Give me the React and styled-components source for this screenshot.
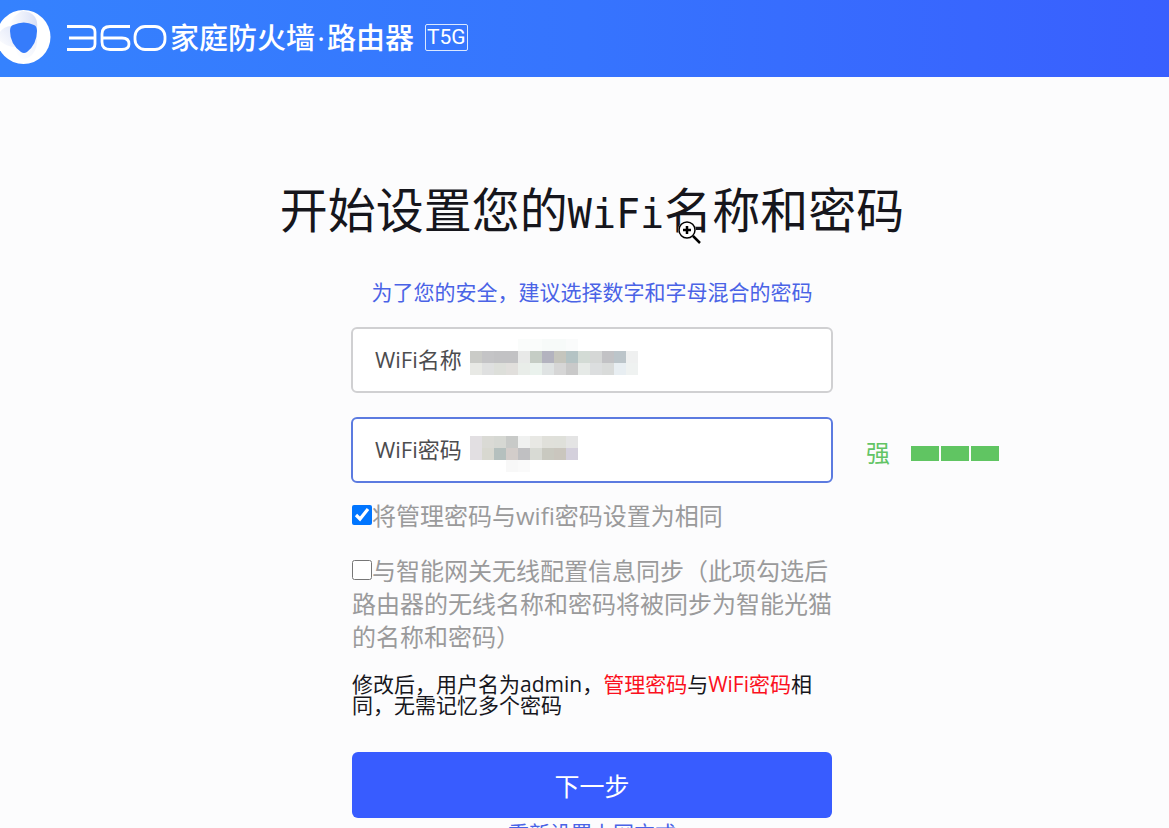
import React, { useState } from "react";
import styled, { createGlobalStyle } from "styled-components";

const Global = createGlobalStyle`
  *, *::before, *::after { box-sizing: border-box; }
  body {
    margin: 0;
    background: #fcfcfd;
    color: #16161c;
    font-family: "Open Sans", "Noto Sans CJK SC", sans-serif;
    overflow: hidden;
  }
`;

const Page = styled.div`
  height: 100vh;
  overflow: hidden;
`;

const Header = styled.header`
  display: flex;
  align-items: center;
  height: 77px;
  padding-bottom: 2px;
  background: linear-gradient(90deg, #3582fe 0%, #3674fe 50%, #395ffe 100%);
  color: #fff;
`;

const Shield = styled.svg`
  flex: none;
  width: 52px;
  height: 60px;
`;

const Wordmark = styled.svg`
  flex: none;
  width: 104px;
  height: 28px;
  margin-left: 14px;
`;

const Brand = styled.span`
  font-size: 29px;
  line-height: 40px;
  font-weight: 500;
  white-space: nowrap;
`;

const Dot = styled.span`
  display: inline-block;
  width: 12px;
  text-align: center;
`;

const Model = styled.span`
  margin-left: 11px;
  padding: 0 1px;
  border: 1px solid #dbe8ff;
  border-radius: 2px;
  font: 21px/25px Roboto, sans-serif;
`;

const Main = styled.main`
  display: flex;
  flex-direction: column;
  align-items: center;
  padding: 97px 0 0 15px;
`;

const Title = styled.h1`
  position: relative;
  margin: 0;
  font-size: 48px;
  line-height: 72px;
  font-weight: 400;
  white-space: nowrap;
`;

const Latin = styled.span`
  font-family: "DejaVu Sans Mono", monospace;
  font-size: 40px;
`;

const Pointer = styled.svg`
  position: absolute;
  left: 397px;
  top: 46px;
  width: 26px;
  height: 26px;
`;

const Hint = styled.p`
  margin: 27px 0 19px;
  font-size: 21px;
  line-height: 31px;
  color: #4a63e6;
`;

const Form = styled.form`
  display: flex;
  flex-direction: column;
  width: 482px;
`;

const Field = styled.div`
  position: relative;
  display: flex;
  align-items: center;
  height: 66px;
  margin-bottom: 24px;
  padding: 0 22px 2px;
  border: 2px solid ${(p) => (p.$active ? "#5c7be0" : "#d0d0d2")};
  border-radius: 6px;
  background: #fff;
`;

const FieldLabel = styled.label`
  flex: none;
  width: 88px;
  font-size: 22px;
  line-height: 32px;
  color: #4c4c4e;
`;

const FieldInput = styled.input`
  flex: 1;
  min-width: 0;
  height: 40px;
  border: 0;
  outline: 0;
  background: transparent;
  font: inherit;
  font-size: 22px;
`;

const Mosaic = styled.svg`
  position: absolute;
  left: 117px;
  top: ${(p) => p.$top}px;
`;

const Strength = styled.div`
  position: absolute;
  left: 100%;
  top: 50%;
  display: flex;
  align-items: center;
  gap: 2px;
  height: 36px;
  margin: -15px 0 0 35px;
  color: #62c465;
  font-size: 24px;
  line-height: 36px;
`;

const StrengthText = styled.span`
  margin-right: 19px;
`;

const Bar = styled.span`
  width: 28px;
  height: 15px;
  background: #60c562;
`;

const Option = styled.label`
  display: block;
  margin: ${(p) => (p.$first ? "-8px" : "22px")} 0 0 1px;
  font-size: 24px;
  line-height: 33px;
  color: #9a9a9b;
`;

const Check = styled.input`
  width: 20px;
  height: 20px;
  margin: 0;
  vertical-align: 0;
`;

const Note = styled.p`
  margin: 21px 0 36px 1px;
  font-size: 21px;
  line-height: 21px;
`;

const Red = styled.span`
  color: #fb1020;
`;

const Next = styled.button`
  height: 66px;
  margin: 0 1px;
  border: 0;
  border-radius: 6px;
  background: #385cff;
  color: #fff;
  font: inherit;
  font-size: 25px;
`;

const Reset = styled.a`
  align-self: center;
  font-size: 21px;
  line-height: 31px;
  color: #4a63e6;
  text-decoration: none;
`;

const NAME_CELLS = [
  ["#fff", "#fff", "#fff", "#fff", "#fafcfb", "#fafcfb", "#f7faf9", "#f7faf9", "#fafbfb"],
  ["#cacbc7", "#c4c4c6", "#c2c2c4", "#c2c2c4", "#e8e9e8", "#c5cdc5", "#b3b3bf", "#c5c5bd", "#b4c3c4", "#d3dbd5", "#d5d7d6", "#c2c2c5", "#bcc5ca", "#eff0f0"],
  ["#e8e9e5", "#dfe0e0", "#dddfda", "#e1dfdc", "#e9ede9", "#eaf2ed", "#dfe3e3", "#d6d6d6", "#c9c9c9", "#e6eae7", "#dcdedf", "#d9dbda", "#e8eef2", "#eff2f1"],
];

const KEY_CELLS = [
  ["#e2dfe2", "#dadad5", "#d6d8d3", "#c8cac8", "#f0f1f0", "#e8e8e4", "#e0e0da", "#dfe0da", "#e4e4e4"],
  ["#e2dfe2", "#d8d8d0", "#b5c0be", "#d3cdca", "#c0c0c2", "#d8dad4", "#c9c9c0", "#cac6be", "#d4d0dc"],
  ["#fff", "#fff", "#fff", "#f8f8f8", "#fafafa"],
];

function Masked({ cells, top }) {
  return (
    <Mosaic $top={top} width="168" height="36" shapeRendering="crispEdges" aria-hidden="true">
      {cells.map((row, y) =>
        row.map((fill, x) => (
          <rect key={`${x}-${y}`} x={x * 12} y={y * 12} width="12" height="12" fill={fill} />
        ))
      )}
    </Mosaic>
  );
}

function ShieldLogo() {
  return (
    <Shield viewBox="0 0 52 60" aria-hidden="true">
      <defs>
        <linearGradient id="foldA" x1="0" y1="0" x2="1" y2="0">
          <stop offset="0" stopColor="#fff" />
          <stop offset="1" stopColor="#cfd8f4" />
        </linearGradient>
        <linearGradient id="foldB" x1="0" y1="1" x2="1" y2="0">
          <stop offset="0" stopColor="#fff" />
          <stop offset="1" stopColor="#d3dcf6" />
        </linearGradient>
      </defs>
      <circle cx="23.5" cy="29" r="27" fill="#fff" />
      <path d="M22 3 Q31 3 35 9 Q38 14 37 20 Q30 15 22 15 Q15 15 9 18 Q13 7 22 3Z" fill="url(#foldA)" opacity=".8" />
      <path d="M-3 30 Q0 19 11 18 Q9 31 16 39 Q5 39 -3 30Z" fill="url(#foldB)" opacity=".7" />
      <path d="M24 45 Q33 40 37 29 Q38 40 32 47 Q28 51 22 51 Q17 49 16 40Z" fill="url(#foldB)" opacity=".4" />
      <path d="M13 17 Q24 12 34 17 Q37 18 37 23 Q37 36 27 44 Q24 46 21 44 Q10 36 10 23 Q10 18 13 17Z" fill="#367cfb" />
    </Shield>
  );
}

function Logo360() {
  return (
    <Wordmark viewBox="0 0 104 28" fill="none" stroke="#fff" strokeWidth="2.800" role="img" aria-label="360">
      <path d="M1 2.500H23Q29 2.500 29 8V20Q29 25.500 23 25.500H1M3 14H29" />
      <path d="M64 2.500H44Q36 2.500 36 10V18Q36 25.500 44 25.500H56Q63 25.500 63 20Q63 14 56 14H36" />
      <rect x="69" y="2.500" width="30" height="23" rx="10" />
    </Wordmark>
  );
}

export default function App() {
  const [same, setSame] = useState(true);
  const [sync, setSync] = useState(false);
  return (
    <Page>
      <Global />
      <Header>
        <ShieldLogo />
        <Logo360 />
        <Brand>家庭防火墙<Dot>·</Dot>路由器</Brand>
        <Model>T5G</Model>
      </Header>
      <Main>
        <Title>
          开始设置您的<Latin>WiFi</Latin>名称和密码
          <Pointer viewBox="0 0 26 26" aria-hidden="true">
            <path d="M15 15L23 23" stroke="#fff" strokeWidth="5" />
            <circle cx="10" cy="10" r="9" fill="#fff" />
            <circle cx="10" cy="10" r="8" fill="#fff" stroke="#000" strokeWidth="1.500" />
            <path d="M10 6V14M6 10H14" stroke="#000" strokeWidth="2.500" />
            <path d="M16 16L23 23" stroke="#000" strokeWidth="2.500" />
          </Pointer>
        </Title>
        <Hint>为了您的安全，建议选择数字和字母混合的密码</Hint>
        <Form onSubmit={(e) => e.preventDefault()}>
          <Field>
            <FieldLabel htmlFor="ssid">WiFi名称</FieldLabel>
            <FieldInput id="ssid" type="text" />
            <Masked cells={NAME_CELLS} top={10} />
          </Field>
          <Field $active>
            <FieldLabel htmlFor="key">WiFi密码</FieldLabel>
            <FieldInput id="key" type="text" />
            <Masked cells={KEY_CELLS} top={17} />
            <Strength>
              <StrengthText>强</StrengthText>
              <Bar />
              <Bar />
              <Bar />
            </Strength>
          </Field>
          <Option $first>
            <Check type="checkbox" checked={same} onChange={(e) => setSame(e.target.checked)} />
            将管理密码与wifi密码设置为相同
          </Option>
          <Option>
            <Check type="checkbox" checked={sync} onChange={(e) => setSync(e.target.checked)} />
            与智能网关无线配置信息同步（此项勾选后路由器的无线名称和密码将被同步为智能光猫的名称和密码）
          </Option>
          <Note>
            修改后，用户名为admin，<Red>管理密码</Red>与<Red>WiFi密码</Red>相同，无需记忆多个密码
          </Note>
          <Next type="submit">下一步</Next>
          <Reset href="#reset">重新设置上网方式</Reset>
        </Form>
      </Main>
    </Page>
  );
}
